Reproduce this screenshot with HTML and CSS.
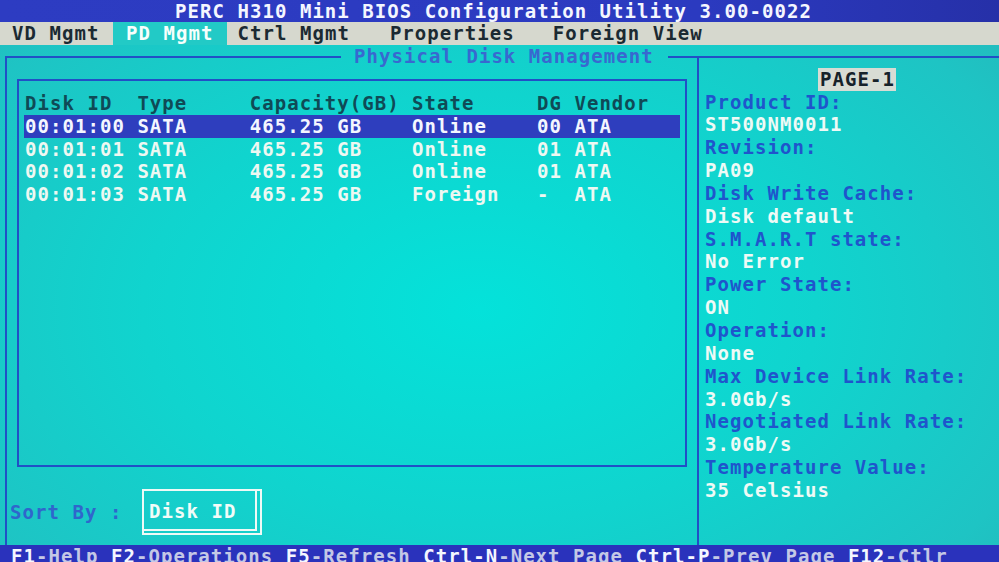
FILE: index.html
```html
<!DOCTYPE html>
<html lang="en">
<head>
<meta charset="utf-8">
<title>PERC H310 Mini BIOS Configuration Utility</title>
<link rel="stylesheet" href="styles.css">
</head>
<body>
<div class="screen">
  <header class="title">PERC H310 Mini BIOS Configuration Utility 3.00-0022</header>
  <nav class="tabs">
    <span class="tab t1">VD Mgmt</span>
    <span class="tab active">PD Mgmt</span>
    <span class="tab t3">Ctrl Mgmt</span>
    <span class="tab t4">Properties</span>
    <span class="tab t5">Foreign View</span>
  </nav>
  <fieldset class="main">
    <legend class="legend">Physical Disk Management</legend>
    <div class="cols">
      <section class="left">
        <div class="listbox">
          <div class="row head"><span>Disk ID</span><span>Type</span><span>Capacity(GB)</span><span>State</span><span>DG</span><span>Vendor</span></div>
          <div class="row sel"><span>00:01:00</span><span>SATA</span><span>465.25 GB</span><span>Online</span><span>00</span><span>ATA</span></div>
          <div class="row"><span>00:01:01</span><span>SATA</span><span>465.25 GB</span><span>Online</span><span>01</span><span>ATA</span></div>
          <div class="row"><span>00:01:02</span><span>SATA</span><span>465.25 GB</span><span>Online</span><span>01</span><span>ATA</span></div>
          <div class="row"><span>00:01:03</span><span>SATA</span><span>465.25 GB</span><span>Foreign</span><span>-</span><span>ATA</span></div>
        </div>
        <div class="sort">
          <span class="sort-label">Sort By :</span>
          <div class="sortbox"><div class="sortbox-in">Disk ID</div></div>
        </div>
      </section>
      <aside class="right">
        <div class="page"><span class="page-tag">PAGE-1</span></div>
        <div class="lbl">Product ID:</div>
        <div class="val">ST500NM0011</div>
        <div class="lbl">Revision:</div>
        <div class="val">PA09</div>
        <div class="lbl">Disk Write Cache:</div>
        <div class="val">Disk default</div>
        <div class="lbl">S.M.A.R.T state:</div>
        <div class="val">No Error</div>
        <div class="lbl">Power State:</div>
        <div class="val">ON</div>
        <div class="lbl">Operation:</div>
        <div class="val">None</div>
        <div class="lbl">Max Device Link Rate:</div>
        <div class="val">3.0Gb/s</div>
        <div class="lbl">Negotiated Link Rate:</div>
        <div class="val">3.0Gb/s</div>
        <div class="lbl">Temperature Value:</div>
        <div class="val">35 Celsius</div>
      </aside>
    </div>
  </fieldset>
  <footer class="keys"><span class="k">F1</span><span class="d">-Help</span> <span class="k">F2</span><span class="d">-Operations</span> <span class="k">F5</span><span class="d">-Refresh</span> <span class="k">Ctrl-N</span><span class="d">-Next Page</span> <span class="k">Ctrl-P</span><span class="d">-Prev Page</span> <span class="k">F12</span><span class="d">-Ctlr</span></footer>
</div>
</body>
</html>
```

FILE: styles.css
```css
:root {
  --cw: 12.4875px;
  --lh: 22.7px;
  --frame: #2150c6;
  --label: #1f55cc;
  --value: #eefaf6;
}

* { box-sizing: border-box; }

html, body {
  margin: 0;
  padding: 0;
  width: 999px;
  height: 562px;
  overflow: hidden;
}

body {
  background: radial-gradient(ellipse 75% 85% at 48% 55%, #04e2da 0%, #10d4ce 45%, #1ec4c4 80%, #26b4b8 100%);
  font-family: "DejaVu Sans Mono", "Liberation Mono", monospace;
  font-weight: bold;
  font-size: 19px;
  letter-spacing: 1.05px;
  line-height: var(--lh);
  color: var(--value);
}

.screen {
  width: 999px;
  height: 562px;
  display: flex;
  flex-direction: column;
}

.title {
  height: 22px;
  line-height: 22px;
  padding-left: 175px;
  background: linear-gradient(90deg, #2d3cc2 0%, #2b3ac0 70%, #2630a8 100%);
  color: #f4f6ff;
  white-space: pre;
}

.tabs {
  height: 23.4px;
  display: flex;
  background: #d6d8ce;
  color: #1b2a32;
  white-space: pre;
}

.tab { line-height: 23.4px; }
.t1 { margin-left: 12px; }
.active {
  margin-left: 13.6px;
  padding: 0 14px 0 13px;
  background: #22cac6;
  color: #f6fffc;
}
.t3 { margin-left: 10px; }
.t4 { margin-left: 40px; }
.t5 { margin-left: 38px; }

.main {
  margin: 0 0 0 5px;
  padding: 0;
  min-width: 0;
  height: 500px;
  border: 2px solid var(--frame);
  border-right: 0;
  border-bottom: 0;
}

.legend {
  margin-left: 334px;
  padding: 0 14px 0 13px;
  line-height: var(--lh);
  height: var(--lh);
  color: #3868d0;
  white-space: pre;
}

.cols {
  margin-top: -10.35px;
  height: 488px;
  display: flex;
}

.left {
  width: 690px;
  flex: none;
  padding-top: 21px;
  display: flex;
  flex-direction: column;
}

.listbox {
  margin: 0 10px;
  height: 388px;
  border: 2px solid var(--frame);
  padding: 11.2px 5px 0 5px;
}

.row {
  display: grid;
  grid-template-columns: calc(var(--cw) * 9) calc(var(--cw) * 9) calc(var(--cw) * 13) calc(var(--cw) * 10) calc(var(--cw) * 3) 1fr;
  padding-left: 1px;
  height: 22.8px;
  line-height: 22.8px;
  white-space: pre;
  color: #eef8f2;
}

.row.head { color: #0f4a56; }

.row.sel {
  background: #2e3ebe;
  color: #f4f6ff;
}

.sort {
  margin-top: 22px;
  padding-left: 3px;
  display: flex;
  align-items: flex-start;
}

.sort-label {
  width: 132px;
  line-height: 46px;
  color: #2f66cc;
  white-space: pre;
}

.sortbox {
  width: 120px;
  height: 46px;
  border: 2px solid #eefaf6;
}

.sortbox-in {
  height: 40px;
  margin: 0 3px 2px 0;
  border-right: 2px solid #eefaf6;
  border-bottom: 2px solid #eefaf6;
  padding-left: 5px;
  line-height: 41px;
  color: #f2fcf8;
  white-space: pre;
}

.right {
  flex: 1;
  border-left: 2px solid var(--frame);
  padding: 10px 0 0 6px;
  line-height: 22.85px;
}

.page {
  padding-left: 113px;
  height: 22.85px;
}

.page-tag {
  display: inline-block;
  background: #d8dcd4;
  color: #16222a;
  padding: 0 1px 0 2px;
  line-height: 22.85px;
}

.lbl, .val {
  height: 22.85px;
  white-space: pre;
}
.lbl { color: var(--label); }
.val { color: var(--value); }

.keys {
  flex: 1;
  overflow: hidden;
  background: #2a32bc;
  padding-left: 11px;
  line-height: var(--lh);
  white-space: pre;
}

.k { color: #f4f6ff; }
.d { color: #c4c8e6; }
```
